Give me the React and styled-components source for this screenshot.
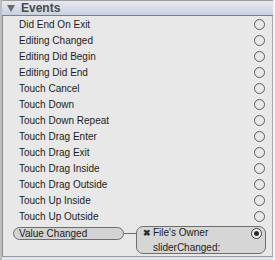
import React from "react";
import { styled, createGlobalStyle } from "styled-components";

const Global = createGlobalStyle`
  html, body {
    margin: 0;
    padding: 0;
    background: #f4f4f4;
  }
  body {
    font-family: "Liberation Sans", Arial, sans-serif;
  }
`;

const Panel = styled.div`
  width: 273px;
  height: 260px;
  display: flex;
  flex-direction: column;
  background: #bdbdbd;
  padding-left: 2px;
  box-sizing: border-box;
  overflow: hidden;
`;

const Header = styled.div`
  height: 14px;
  display: flex;
  align-items: center;
  gap: 6px;
  padding-left: 5px;
  border-top: 1px solid #9c9c9c;
  border-bottom: 1px solid #7f7f7f;
  background: linear-gradient(#e6e9f2, #c9d0e0);
  font-size: 12px;
  font-weight: bold;
  color: #4a4a4a;
`;

const Arrow = styled.span`
  width: 0;
  height: 0;
  border-left: 4px solid transparent;
  border-right: 4px solid transparent;
  border-top: 7px solid #6a6a6a;
`;

const List = styled.div`
  display: flex;
  flex-direction: column;
  background: #e8e8e8;
  border-left: 1px solid #8e8e8e;
  border-right: 1px solid #a8a8a8;
  border-bottom: 1px solid #9a9a9a;
`;

const Row = styled.div`
  height: 16px;
  display: flex;
  align-items: center;
  justify-content: space-between;
  padding-left: 16px;
  padding-right: 7px;
  font-size: 10px;
  color: #1c1c1c;
`;

const Radio = styled.span`
  width: 9px;
  height: 9px;
  border-radius: 50%;
  border: 1px solid ${({ $on }) => ($on ? "#3a3a3a" : "#5e5e5e")};
  background: ${({ $on }) => ($on ? "#f2f2f2" : "transparent")};
  display: flex;
  align-items: center;
  justify-content: center;
  &::after {
    content: "";
    display: ${({ $on }) => ($on ? "block" : "none")};
    width: 5px;
    height: 5px;
    border-radius: 50%;
    background: #2a2a2a;
  }
`;

const BoundRow = styled.div`
  display: flex;
  align-items: flex-start;
  padding: 2px 0 2px 10px;
  font-size: 10px;
  color: #1c1c1c;
`;

const Pill = styled.div`
  width: 104px;
  height: 11px;
  margin-top: 1px;
  padding-left: 5px;
  display: flex;
  align-items: center;
  border: 1px solid #6e6e6e;
  border-radius: 7px;
  background: #d3d3d3;
`;

const Wire = styled.div`
  width: 12px;
  height: 1px;
  margin-top: 7px;
  background: #6e6e6e;
`;

const Target = styled.div`
  width: 130px;
  height: 28px;
  box-sizing: border-box;
  border: 1px solid #6e6e6e;
  border-radius: 7px;
  background: #d6d6d6;
  display: flex;
  flex-direction: column;
  padding: 0 3px 0 6px;
`;

const TargetLine = styled.div`
  height: 12px;
  flex-shrink: 0;
  display: flex;
  align-items: center;
  gap: 4px;
  line-height: 12px;
  margin-top: ${({ $indent }) => ($indent ? "3px" : "0")};
  padding-left: ${({ $indent }) => ($indent ? "10px" : "0")};
`;

const Cross = styled.span`
  width: 6px;
  font-size: 9px;
  font-weight: bold;
  color: #2e2e2e;
`;

const Grow = styled.span`
  flex: 1;
`;

const Footer = styled.div`
  flex: 1;
  background: #dfe4ee;
`;

const events = [
  "Did End On Exit",
  "Editing Changed",
  "Editing Did Begin",
  "Editing Did End",
  "Touch Cancel",
  "Touch Down",
  "Touch Down Repeat",
  "Touch Drag Enter",
  "Touch Drag Exit",
  "Touch Drag Inside",
  "Touch Drag Outside",
  "Touch Up Inside",
  "Touch Up Outside",
];

export default function App() {
  return (
    <>
      <Global />
      <Panel>
        <Header>
          <Arrow />
          Events
        </Header>
        <List>
          {events.map((e) => (
            <Row key={e}>
              <span>{e}</span>
              <Radio />
            </Row>
          ))}
          <BoundRow>
            <Pill>Value Changed</Pill>
            <Wire />
            <Target>
              <TargetLine>
                <Cross>✖</Cross>
                <Grow>File's Owner</Grow>
                <Radio $on />
              </TargetLine>
              <TargetLine $indent>sliderChanged:</TargetLine>
            </Target>
          </BoundRow>
        </List>
        <Footer />
      </Panel>
    </>
  );
}
